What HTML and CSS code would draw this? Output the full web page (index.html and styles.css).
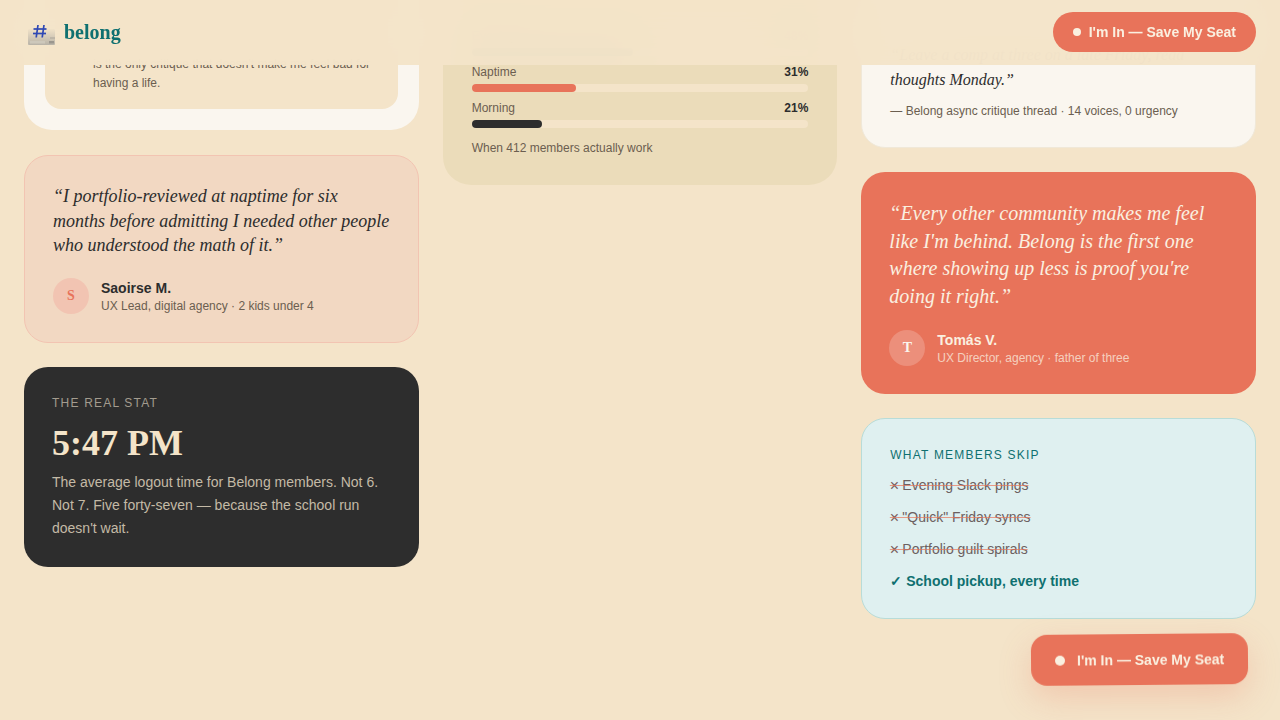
FILE: index.html
```html
<!DOCTYPE html>
<html lang="en">
<head>
    <meta charset="UTF-8">
    <meta name="viewport" content="width=device-width, initial-scale=1.0">
    <title>Belong</title>
    <link rel="stylesheet" href="styles.css">
</head>
<body>

    <nav class="nav">
        <a class="logo" href="#">
            <svg class="logo-icon" width="30" height="27" viewBox="0 0 30 27" aria-hidden="true">
                <defs>
                    <linearGradient id="slab" x1="0" y1="0" x2="0" y2="1">
                        <stop offset="0" stop-color="#f1e2c8"/>
                        <stop offset="1" stop-color="#b8b3a8"/>
                    </linearGradient>
                </defs>
                <rect x="1" y="10" width="27" height="16" rx="1" fill="url(#slab)"/>
                <rect x="3" y="22" width="15" height="2.5" fill="#cdc8bb"/>
                <rect x="23" y="18.5" width="5" height="1" fill="#a9a499"/>
                <rect x="22" y="22" width="5" height="2.5" fill="#9a968e"/>
                <g stroke="#2f48b4" stroke-width="1.7" fill="none">
                    <path d="M11 6 L9.2 18.5"/>
                    <path d="M17 6 L15.2 18.5"/>
                    <path d="M6.5 10 H19.5"/>
                    <path d="M6 14.5 H19"/>
                </g>
            </svg>
            <span>belong</span>
        </a>
        <a class="cta" href="#"><span class="cta-dot"></span>I'm In — Save My Seat</a>
    </nav>

    <main class="board">
        <section class="col">
            <article class="card card-white card-left-top">
                <div class="inset">
                    <p class="inset-text">is the only critique that doesn't make me feel bad for having a life.</p>
                </div>
            </article>

            <article class="card card-peach">
                <p class="quote">“I portfolio-reviewed at naptime for six months before admitting I needed other people who understood the math of it.”</p>
                <div class="author">
                    <span class="avatar avatar-peach">S</span>
                    <div>
                        <div class="author-name">Saoirse M.</div>
                        <div class="author-role">UX Lead, digital agency · 2 kids under 4</div>
                    </div>
                </div>
            </article>

            <article class="card card-dark">
                <div class="eyebrow">THE REAL STAT</div>
                <div class="stat">5:47 PM</div>
                <p class="stat-text">The average logout time for Belong members. Not 6. Not 7. Five forty-seven — because the school run doesn't wait.</p>
            </article>
        </section>

        <section class="col">
            <article class="card card-sand card-mid-top">
                <div class="bar-row">
                    <div class="bar-head"><span>Evening</span><b>48%</b></div>
                    <div class="track"><div class="fill fill-teal" style="width: 48%"></div></div>
                </div>
                <div class="bar-row">
                    <div class="bar-head"><span>Naptime</span><b>31%</b></div>
                    <div class="track"><div class="fill fill-coral" style="width: 31%"></div></div>
                </div>
                <div class="bar-row">
                    <div class="bar-head"><span>Morning</span><b>21%</b></div>
                    <div class="track"><div class="fill fill-dark" style="width: 21%"></div></div>
                </div>
                <p class="caption">When 412 members actually work</p>
            </article>
        </section>

        <section class="col">
            <article class="card card-white card-right-top">
                <p class="thread-quote">“Leave a comp at three on a late Friday, read thoughts Monday.”</p>
                <p class="thread-source">— Belong async critique thread · 14 voices, 0 urgency</p>
            </article>

            <article class="card card-coral">
                <p class="quote quote-big">“Every other community makes me feel like I'm behind. Belong is the first one where showing up less is proof you're doing it right.”</p>
                <div class="author">
                    <span class="avatar avatar-coral">T</span>
                    <div>
                        <div class="author-name">Tomás V.</div>
                        <div class="author-role">UX Director, agency · father of three</div>
                    </div>
                </div>
            </article>

            <article class="card card-mint">
                <div class="eyebrow eyebrow-teal">WHAT MEMBERS SKIP</div>
                <ul class="skip-list">
                    <li class="skip"><span class="skip-x">×</span> Evening Slack pings</li>
                    <li class="skip"><span class="skip-x">×</span> "Quick" Friday syncs</li>
                    <li class="skip"><span class="skip-x">×</span> Portfolio guilt spirals</li>
                    <li class="keep">✓ School pickup, every time</li>
                </ul>
            </article>
        </section>
    </main>

    <a class="float-cta" href="#"><span class="float-dot"></span>I'm In — Save My Seat</a>

</body>
</html>
```

FILE: styles.css
```css
html, body {
    height: 100%;
}

body {
    font-family: "Liberation Sans", Arial, sans-serif;
    background-color: #f4e4c9;
    color: #2d2d2d;
    margin: 0;
    padding: 0;
    overflow: hidden;
}

a {
    text-decoration: none;
}

p {
    margin: 0;
}

/* nav */
.nav {
    position: fixed;
    top: 0;
    left: 0;
    right: 0;
    z-index: 10;
    height: 65px;
    box-sizing: border-box;
    padding: 0 24px;
    display: flex;
    justify-content: space-between;
    align-items: center;
    background: rgba(244, 228, 201, 0.96);
    backdrop-filter: blur(20px);
}

.logo {
    display: flex;
    align-items: center;
    gap: 7px;
    margin-top: -2px;
    font-family: "Liberation Serif", serif;
    font-size: 20px;
    font-weight: 700;
    line-height: 24px;
    color: #0f7070;
}

.logo-icon {
    margin-left: 3px;
    margin-top: 1px;
}

.cta {
    display: flex;
    align-items: center;
    gap: 8px;
    height: 40px;
    margin-top: -1px;
    padding: 0 20px;
    border-radius: 20px;
    background: #e8735a;
    color: #faf0e0;
    font-size: 14px;
    font-weight: 700;
}

.cta-dot {
    width: 8px;
    height: 8px;
    border-radius: 50%;
    background: #faf0e0;
}

/* columns */
.board {
    display: grid;
    grid-template-columns: repeat(3, 1fr);
    gap: 24px;
    align-items: start;
    padding: 0 24px;
    margin-top: -119px;
}

.col {
    display: flex;
    flex-direction: column;
    gap: 24px;
}

.card {
    box-sizing: border-box;
    border-radius: 24px;
    padding: 28px;
}

.card-white {
    background: #faf6ef;
    display: flex;
    flex-direction: column;
    justify-content: flex-end;
}

.card-left-top {
    height: 249px;
    margin-bottom: 1px;
    padding: 21px;
    border-radius: 28px;
}

.inset {
    flex: 1;
    display: flex;
    flex-direction: column;
    justify-content: flex-end;
    background: #f4e4c9;
    border-radius: 16px;
    padding: 16px 20px 16px 48px;
}

.inset-text {
    font-size: 12px;
    line-height: 19px;
    color: #6b5e50;
}

.card-right-top {
    height: 267px;
    padding: 0 28px 27px;
    border: 1px solid #f0e8d8;
}

.thread-quote {
    font-family: "Liberation Serif", serif;
    font-style: italic;
    font-size: 16px;
    line-height: 25px;
    color: #2d2d2d;
    margin-bottom: 10px;
}

.thread-source {
    font-size: 12px;
    line-height: 18px;
    color: #6b5e50;
}

.card-peach {
    background: #f2d8c2;
    border: 1px solid #f2c4b2;
}

.quote {
    font-family: "Liberation Serif", serif;
    font-style: italic;
    font-size: 18px;
    line-height: 24.7px;
    color: #2d2d2d;
    margin-bottom: 20px;
}

.author {
    display: flex;
    align-items: center;
    gap: 12px;
}

.avatar {
    flex: none;
    width: 36px;
    height: 36px;
    border-radius: 50%;
    display: flex;
    align-items: center;
    justify-content: center;
    font-family: "Liberation Serif", serif;
    font-size: 14px;
    font-weight: 700;
}

.avatar-peach {
    background: #f2c4b2;
    color: #e8735a;
}

.avatar-coral {
    background: rgba(255, 255, 255, 0.2);
    color: #faf6ef;
}

.author-name {
    font-size: 14px;
    font-weight: 700;
    line-height: 20px;
}

.author-role {
    font-size: 12px;
    line-height: 16px;
    color: #6b5e50;
}

.card-dark {
    background: #2d2d2d;
    height: 200px;
    padding-top: 29px;
}

.eyebrow {
    font-size: 12px;
    line-height: 14px;
    letter-spacing: 1.2px;
    color: #a39c8f;
}

.eyebrow-teal {
    color: #0f7070;
    margin-top: 1px;
}

.stat {
    font-family: "Liberation Serif", serif;
    font-size: 36px;
    font-weight: 700;
    line-height: 44px;
    color: #f4e4c9;
    margin-top: 11px;
    margin-bottom: 6px;
}

.stat-text {
    font-size: 14px;
    line-height: 23.1px;
    color: #c4baa6;
}

/* stats bars */
.card-sand {
    background: #ebdcba;
    border-radius: 28px;
    height: 304px;
    padding: 0 29px 30px;
    display: flex;
    flex-direction: column;
    justify-content: flex-end;
}

.bar-row {
    margin-bottom: 9px;
}

.bar-head {
    display: flex;
    justify-content: space-between;
    font-size: 12px;
    line-height: 14px;
    color: #6b5e50;
    margin-bottom: 5px;
}

.bar-head b {
    color: #2d2d2d;
}

.track {
    height: 8px;
    border-radius: 4px;
    background: #f4e4c9;
}

.fill {
    height: 100%;
    border-radius: 4px;
}

.fill-teal {
    background: #0f7070;
}

.fill-coral {
    background: #e8735a;
}

.fill-dark {
    background: #2d2d2d;
}

.caption {
    font-size: 12px;
    line-height: 14px;
    color: #6b5e50;
    margin-top: 4px;
}

/* right column */
.card-coral {
    background: #e8735a;
    height: 222px;
}

.quote-big {
    font-size: 20px;
    line-height: 27.6px;
    color: #faf0e0;
    margin-bottom: 20px;
}

.card-coral .author-name {
    color: #faf0e0;
}

.card-coral .author-role {
    color: rgba(250, 240, 224, 0.75);
}

.card-mint {
    background: #dff0f0;
    border: 1px solid #b8dcd8;
    height: 201px;
}

.skip-list {
    list-style: none;
    margin: 7px 0 0;
    padding: 0;
    font-size: 14px;
}

.skip-list li {
    line-height: 16px;
    padding: 8px 0;
}

.skip {
    color: #6b6060;
    text-decoration: line-through;
    text-decoration-color: rgba(232, 115, 90, 0.7);
}

.skip-x {
    font-size: 16px;
    line-height: 14px;
    margin-left: -0.5px;
    margin-right: -0.7px;
    vertical-align: -1px;
    color: #7a5f60;
}

.keep {
    color: #0f7070;
    font-weight: 700;
}

/* floating button */
.float-cta {
    position: fixed;
    right: 32px;
    bottom: 35px;
    z-index: 11;
    display: flex;
    align-items: center;
    gap: 12px;
    height: 51px;
    padding: 0 24px;
    border-radius: 16px;
    background: #e8735a;
    color: #faf0e0;
    font-size: 14px;
    font-weight: 700;
    box-shadow: 0 12px 32px rgba(232, 115, 90, 0.25);
    transform: rotate(-0.5deg);
}

.float-dot {
    width: 10px;
    height: 10px;
    border-radius: 50%;
    background: #faf0e0;
}
```
